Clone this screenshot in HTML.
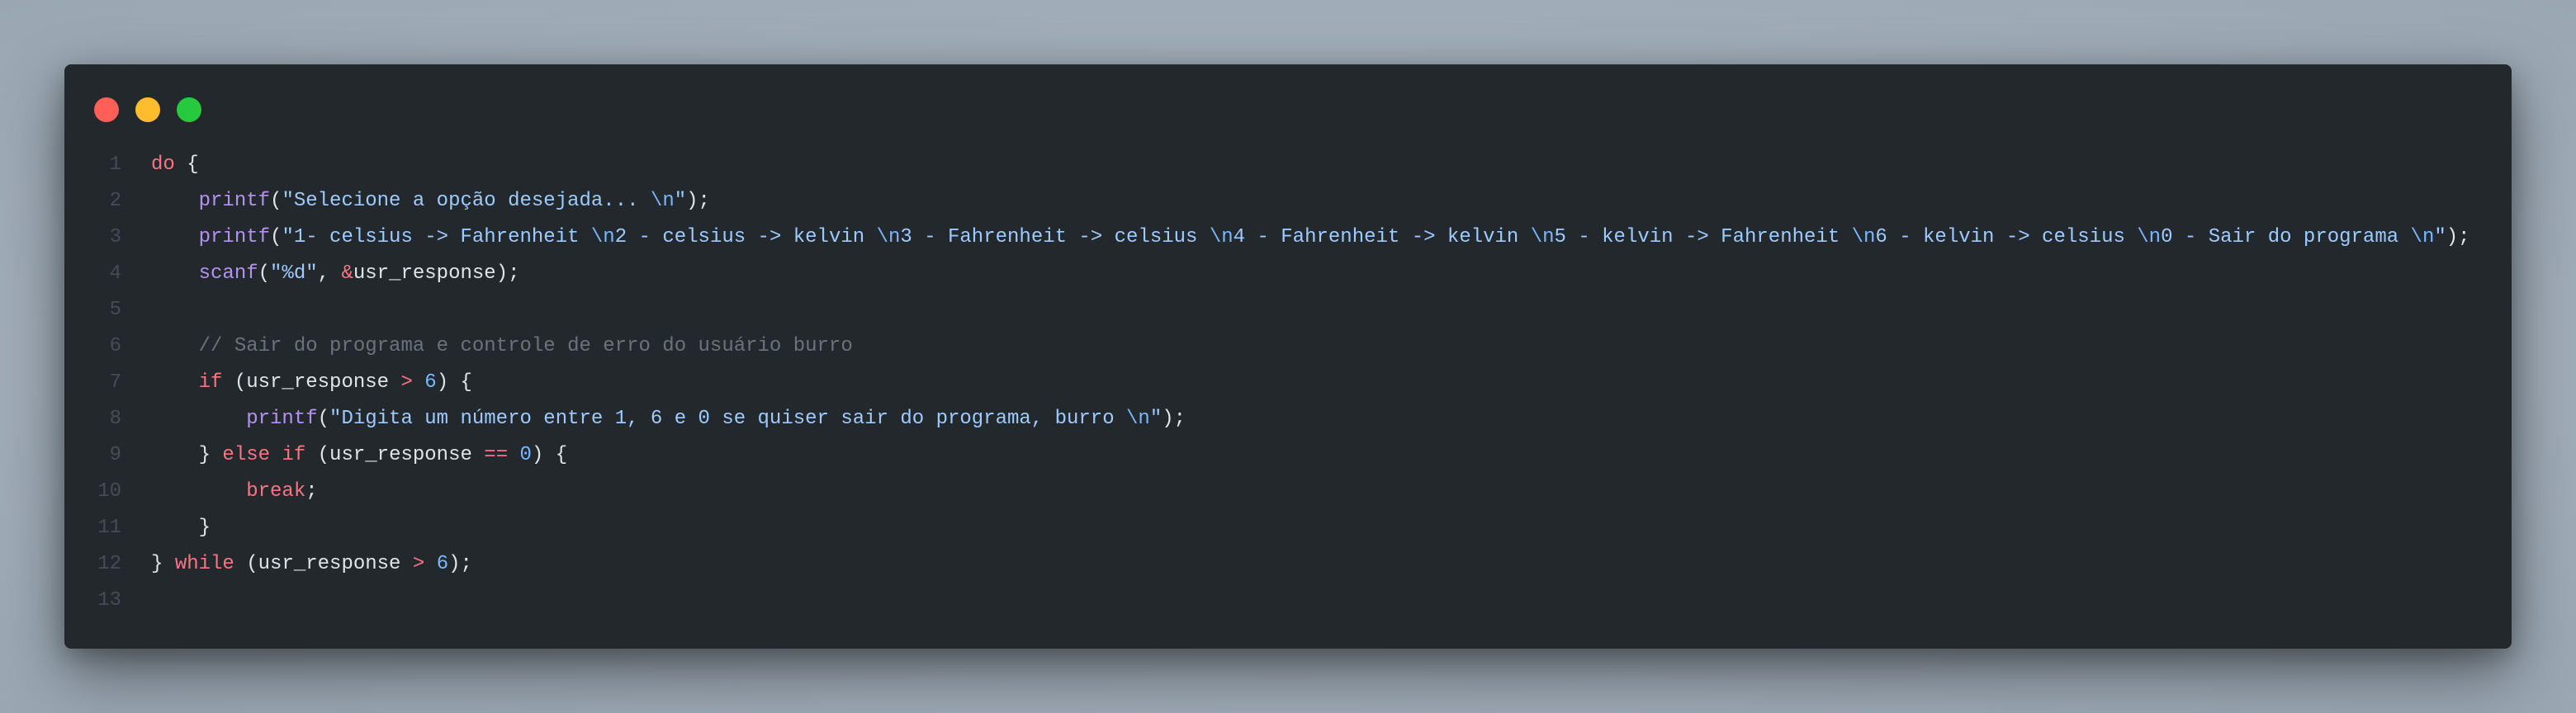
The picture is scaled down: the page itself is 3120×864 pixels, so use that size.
<!DOCTYPE html>
<html><head><meta charset="utf-8"><style>
html,body{margin:0;padding:0}
body{width:3120px;height:864px;overflow:hidden;background:radial-gradient(ellipse at 50% 50%,#a9b4bf 0%,#a2aeba 60%,#9aa7b3 100%);position:relative}
.win{position:absolute;left:78px;top:78px;width:2964px;height:708px;background:#23282d;border-radius:8px;box-shadow:0 30px 80px rgba(0,0,0,.45),0 10px 30px rgba(0,0,0,.25)}
.dot{position:absolute;top:118px;width:30px;height:30px;border-radius:50%}
.code{position:absolute;left:0;top:178px;font-family:"Liberation Mono",monospace;font-size:24px;line-height:44px;color:#e1e4e8;white-space:pre}
.ln{display:inline-block;text-align:right;color:#444d56;padding-right:36px;box-sizing:border-box;width:183px}
.k{color:#f97583}.f{color:#b392f0}.s{color:#9ecbff}.e{color:#79b8ff}.c{color:#6a737d}.n{color:#79b8ff}
</style></head><body>
<div class="win"></div>
<div class="dot" style="left:114px;background:#ff5f56"></div>
<div class="dot" style="left:164px;background:#ffbd2e"></div>
<div class="dot" style="left:214px;background:#27c93f"></div>
<div class="code"><div><span class="ln">1</span><span class="k">do</span> {</div><div><span class="ln">2</span>    <span class="f">printf</span>(<span class="s">"Selecione a opção desejada... </span><span class="e">\n</span><span class="s">"</span>);</div><div><span class="ln">3</span>    <span class="f">printf</span>(<span class="s">"1- celsius -&gt; Fahrenheit </span><span class="e">\n</span><span class="s">2 - celsius -&gt; kelvin </span><span class="e">\n</span><span class="s">3 - Fahrenheit -&gt; celsius </span><span class="e">\n</span><span class="s">4 - Fahrenheit -&gt; kelvin </span><span class="e">\n</span><span class="s">5 - kelvin -&gt; Fahrenheit </span><span class="e">\n</span><span class="s">6 - kelvin -&gt; celsius </span><span class="e">\n</span><span class="s">0 - Sair do programa </span><span class="e">\n</span><span class="s">"</span>);</div><div><span class="ln">4</span>    <span class="f">scanf</span>(<span class="s">"%d"</span>, <span class="k">&amp;</span>usr_response);</div><div><span class="ln">5</span></div><div><span class="ln">6</span>    <span class="c">// Sair do programa e controle de erro do usuário burro</span></div><div><span class="ln">7</span>    <span class="k">if</span> (usr_response <span class="k">&gt;</span> <span class="n">6</span>) {</div><div><span class="ln">8</span>        <span class="f">printf</span>(<span class="s">"Digita um número entre 1, 6 e 0 se quiser sair do programa, burro </span><span class="e">\n</span><span class="s">"</span>);</div><div><span class="ln">9</span>    } <span class="k">else</span> <span class="k">if</span> (usr_response <span class="k">==</span> <span class="n">0</span>) {</div><div><span class="ln">10</span>        <span class="k">break</span>;</div><div><span class="ln">11</span>    }</div><div><span class="ln">12</span>} <span class="k">while</span> (usr_response <span class="k">&gt;</span> <span class="n">6</span>);</div><div><span class="ln">13</span></div></div>
</body></html>
